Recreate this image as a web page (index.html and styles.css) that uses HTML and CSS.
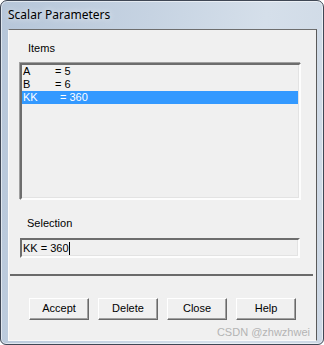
FILE: index.html
```html
<!DOCTYPE html>
<html>
<head>
<meta charset="utf-8">
<link rel="stylesheet" href="styles.css">
</head>
<body>
<div class="window">
  <div class="titlebar">Scalar Parameters</div>
  <div class="client">
    <div class="label label-items">Items</div>
    <div class="listbox">
      <div class="row"><span class="name">A</span><span>= 5</span></div>
      <div class="row"><span class="name">B</span><span>= 6</span></div>
      <div class="row selected"><span class="name name-kk">KK</span><span>= 360</span></div>
    </div>
    <div class="label label-sel">Selection</div>
    <div class="textbox"><span>KK = 360</span><span class="caret"></span></div>
    <div class="separator"></div>
    <div class="buttons">
      <div class="btn">Accept</div>
      <div class="btn">Delete</div>
      <div class="btn">Close</div>
      <div class="btn">Help</div>
    </div>
  </div>
  <div class="watermark">CSDN @zhwzhwei</div>
</div>
</body>
</html>
```
FILE: styles.css
```css
* { box-sizing: border-box; }
html, body { margin: 0; padding: 0; background: #ffffff; }
body { width: 324px; height: 345px; overflow: hidden; }

.window {
  position: relative;
  width: 324px;
  height: 345px;
  display: flex;
  flex-direction: column;
  background: linear-gradient(100deg, #b6c6d9 0%, #c6d3e2 40%, #d5dfea 70%, #cdd8e5 100%);
  border: 1px solid #3f4755;
  border-radius: 7px 7px 6px 6px;
  box-shadow: inset 0 0 0 1px rgba(255,255,255,0.55);
}

.titlebar {
  height: 28px;
  padding: 6px 0 0 7px;
  font-family: "Noto Sans", "Open Sans", sans-serif;
  font-size: 12px;
  line-height: 16px;
  color: #000;
  text-shadow: 0 0 6px rgba(255,255,255,0.9);
}

.client {
  margin: 0 6px 0 7px;
  height: 312px;
  background: #f0f0f0;
  border-top: 1px solid #6e6e6e;
  border-right: 1px solid #5a5a5a;
  border-left: 1px solid #fafafa;
  border-bottom: 1px solid #fafafa;
  font-family: "Liberation Sans", Arial, sans-serif;
  font-size: 11px;
  color: #000;
  display: flex;
  flex-direction: column;
}

.label { line-height: 14px; }
.label-items { margin: 11px 0 0 19px; }
.label-sel { margin: 16px 0 0 18px; }

.listbox {
  margin: 8px 0 0 11px;
  width: 281px;
  height: 137px;
  background: #f0f0f0;
  border-style: solid;
  border-width: 2px;
  border-color: #6d6d6d #fdfdfd #fdfdfd #6d6d6d;
  box-shadow: inset -1px -1px 0 #e3e3e3, -1px -1px 0 #a0a0a0;
}

.row {
  height: 13px;
  line-height: 13px;
  padding-left: 1px;
  display: flex;
  white-space: pre;
}
.row .name { display: inline-block; width: 32px; }
.row .name-kk { width: 37px; }
.row.selected { background: #3399ff; color: #fff; margin-right: 1px; }

.textbox {
  margin: 8px 0 0 11px;
  width: 280px;
  height: 20px;
  background: #f0f0f0;
  border-style: solid;
  border-width: 2px;
  border-color: #6d6d6d #fdfdfd #fdfdfd #6d6d6d;
  box-shadow: inset -1px -1px 0 #e3e3e3;
  padding-left: 1px;
  line-height: 15px;
  display: flex;
  align-items: center;
  white-space: pre;
}
.caret {
  display: inline-block;
  width: 1px;
  height: 13px;
  background: #000;
}

.separator {
  margin: 16px 0 0 1px;
  width: 303px;
  height: 2px;
  background: #6a6a6a;
}

.buttons {
  margin: 22px 0 0 20px;
  display: flex;
  gap: 9px;
}
.btn {
  width: 60px;
  height: 22px;
  background: #f0f0f0;
  border-style: solid;
  border-width: 1px;
  border-color: #ffffff #696969 #696969 #ffffff;
  box-shadow: inset -1px -1px 0 #a0a0a0;
  display: flex;
  align-items: center;
  justify-content: center;
  line-height: 13px;
  padding-bottom: 1px;
}

.watermark {
  position: absolute;
  right: 13px;
  bottom: 6px;
  font-family: "Liberation Sans", Arial, sans-serif;
  font-size: 11px;
  line-height: 12px;
  color: #b4b4b4;
}
```
